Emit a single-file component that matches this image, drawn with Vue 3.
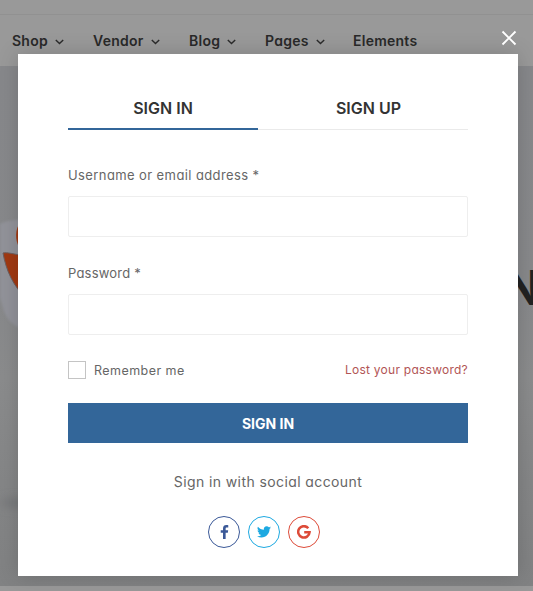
<script setup>
import { ref } from 'vue'

const menu = [
  { label: 'Shop', sub: true, key: 'shop' },
  { label: 'Vendor', sub: true, key: 'vendor' },
  { label: 'Blog', sub: true, key: 'blog' },
  { label: 'Pages', sub: true, key: 'pages' },
  { label: 'Elements', sub: false, key: 'elements' },
]
const tab = ref('in')
const username = ref('')
const password = ref('')
const remember = ref(false)
</script>

<template>
  <div class="page">
    <div class="topbar"></div>
    <nav class="menu">
      <a v-for="m in menu" :key="m.key" class="menu-item" :class="m.key">
        <span class="menu-label">{{ m.label }}</span>
        <svg v-if="m.sub" class="chevron" viewBox="0 0 9 6" width="9" height="6">
          <path d="M0.8 0.9 4.5 4.6 8.2 0.9" fill="none" stroke="#2b2b2b" stroke-width="1.4" />
        </svg>
      </a>
    </nav>
    <div class="hero">
      <svg class="hero-art" viewBox="0 0 533 520" width="533" height="520">
        <defs>
          <filter id="soft" x="-50%" y="-50%" width="200%" height="200%"><feGaussianBlur stdDeviation="0.8" /></filter>
          <filter id="haze" x="-50%" y="-100%" width="200%" height="300%"><feGaussianBlur stdDeviation="4" /></filter>
        </defs>
        <ellipse cx="16" cy="437" rx="16" ry="5" fill="#77787a" filter="url(#haze)" />
        <path d="M0 158C6 155 12 154 26 153V264C12 260 7 253 4 245 2 238 1 234 0 232Z" fill="#92939a" filter="url(#soft)" />
        <path d="M3 187C7 186 13 188 26 190V232C13 220 6 204 3 187Z" fill="#a13912" stroke="#6c5f60" stroke-width="1" />
        <path d="M20 157C15 163 15 174 19 181H26V157Z" fill="#a13912" />
      </svg>
      <span class="hero-text">N</span>
    </div>

    <div class="modal">
      <button class="close" aria-label="Close">
        <svg viewBox="0 0 16 16" width="16" height="16"><path d="M1.5 1.5 14.5 14.5M14.5 1.5 1.5 14.5" stroke="#fff" stroke-width="1.9" /></svg>
      </button>
      <div class="tabs">
        <button class="tab" :class="{ active: tab === 'in' }" @click="tab = 'in'">SIGN IN</button>
        <button class="tab" :class="{ active: tab === 'up' }" @click="tab = 'up'">SIGN UP</button>
      </div>
      <form class="form" @submit.prevent>
        <label class="label user" for="u">Username or email address *</label>
        <input id="u" v-model="username" class="field" type="text" />
        <label class="label pass" for="p">Password *</label>
        <input id="p" v-model="password" class="field" type="password" />
        <div class="options">
          <label class="remember"><input v-model="remember" class="check" type="checkbox" /><span>Remember me</span></label>
          <a class="lost">Lost your password?</a>
        </div>
        <button class="submit">SIGN IN</button>
      </form>
      <div class="social-title">Sign in with social account</div>
      <div class="socials">
        <a class="social fb">
          <svg viewBox="0 0 10 16" width="9" height="14"><path d="M9.3.2V2.8H7.8C6.6 2.8 6.3 3.4 6.3 4.2V6H9.2L8.8 8.8H6.3V16H3.3V8.8H.7V6H3.3V3.8C3.3 1.3 4.8 0 7.1 0 8.1 0 9 .1 9.3.2Z" fill="currentColor" /></svg>
        </a>
        <a class="social tw">
          <svg viewBox="0 0 24 20" width="14" height="12"><path d="M24 2.4c-.9.4-1.8.7-2.8.8 1-.6 1.8-1.6 2.2-2.7-1 .6-2 1-3.1 1.2A4.9 4.9 0 0 0 11.9 6.2C7.8 6 4.2 4 1.7.9A4.9 4.9 0 0 0 3.2 7.5C2.4 7.5 1.7 7.2 1 6.9 1 9.3 2.7 11.3 4.9 11.7 4.2 11.9 3.5 11.9 2.7 11.8 3.3 13.8 5.1 15.1 7.3 15.2A9.9 9.9 0 0 1 0 17.2 14 14 0 0 0 7.5 19.4C16.6 19.4 21.7 11.7 21.5 4.9 22.5 4.2 23.3 3.4 24 2.4Z" fill="currentColor" /></svg>
        </a>
        <a class="social gg">
          <svg viewBox="0 0 14 14" width="14" height="14"><path d="M11.3 3.2A5.700 5.700 0 1 0 12.600 7.200H7.200" fill="none" stroke="currentColor" stroke-width="2.5" /></svg>
        </a>
      </div>
    </div>
  </div>
</template>

<style>
body {
  overflow: hidden;
}
</style>

<style scoped>
.page {
  position: relative;
  width: 533px;
  height: 591px;
  overflow: hidden;
  background: #999;
  font-family: Inter, "Noto Sans", sans-serif;
  font-feature-settings: "cv11";
}
.page * {
  box-sizing: border-box;
}
button {
  border: 0;
  padding: 0;
  background: none;
  font: inherit;
  font-feature-settings: inherit;
}
.topbar {
  height: 15px;
  border-bottom: 1px solid #919191;
}
.menu {
  display: grid;
  grid-template-columns: 81px 96px 76px 88px 80px;
  align-items: center;
  height: 51px;
  padding-left: 12px;
}
.menu-item {
  display: flex;
  align-items: center;
  gap: 7px;
  font-size: 14px;
  line-height: 20px;
  font-weight: 600;
  letter-spacing: 0.25px;
  color: #292929;
  white-space: nowrap;
}
.chevron {
  margin-top: 3px;
}
.hero {
  position: relative;
  height: 520px;
  background: linear-gradient(#87888b 0%, #88898b 45%, #8b8c8d 60%, #858687 80%, #818283 100%);
}
.hero-art {
  display: block;
}
.hero-text {
  position: absolute;
  left: 504px;
  top: 193px;
  font-size: 48px;
  line-height: 58px;
  font-weight: 700;
  color: #222;
}
.modal {
  position: absolute;
  left: 18px;
  top: 54px;
  width: 500px;
  height: 522px;
  padding: 33px 50px 0;
  background: #fff;
  box-shadow: 0 0 20px rgba(0, 0, 0, 0.17);
}
.close {
  position: absolute;
  right: 1px;
  top: -24px;
  width: 16px;
  height: 16px;
}
.close svg {
  display: block;
}
.tabs {
  display: flex;
  height: 43px;
  border-bottom: 1px solid #eaeaea;
}
.tab {
  flex: 0 0 190px;
  height: 43px;
  border-bottom: 2px solid transparent;
  font-size: 16px;
  font-weight: 600;
  color: #333;
}
.tab + .tab {
  flex-basis: 210px;
  padding-left: 11px;
}
.tab.active {
  border-bottom-color: #336699;
}
.form {
  display: flex;
  flex-direction: column;
}
.label {
  align-self: flex-start;
  margin-top: 35px;
  font-size: 13px;
  line-height: 20px;
  letter-spacing: 0.4px;
  color: #666;
  white-space: nowrap;
}
.pass {
  margin-top: 26px;
  letter-spacing: 0.2px;
}
.field {
  height: 41px;
  margin: 11px 0 0;
  padding: 0 14px;
  border: 1px solid #eee;
  border-radius: 2px;
  background: #fff;
  outline: 0;
}
.options {
  display: flex;
  justify-content: space-between;
  align-items: center;
  height: 20px;
  margin-top: 25px;
  font-size: 12px;
  color: #666;
}
.remember {
  display: flex;
  align-items: center;
  gap: 8px;
  font-size: 12.5px;
  letter-spacing: 0.45px;
}
.check {
  appearance: none;
  width: 18px;
  height: 18px;
  margin: 0;
  border: 1px solid #c4c4c4;
}
.lost {
  margin-top: -2px;
  letter-spacing: 0.25px;
  color: #b25555;
}
.submit {
  height: 40px;
  margin-top: 23px;
  background: #336699;
  color: #fff;
  font-size: 14px;
  font-weight: 700;
}
.social-title {
  margin-top: 29px;
  text-align: center;
  font-size: 14px;
  line-height: 20px;
  letter-spacing: 0.4px;
  color: #666;
}
.socials {
  display: flex;
  gap: 8px;
  margin: 24px 0 0 140px;
}
.social {
  display: flex;
  align-items: center;
  justify-content: center;
  width: 32px;
  height: 32px;
  border: 1px solid currentColor;
  border-radius: 50%;
}
.fb { color: #3b5998; }
.tw { color: #1da9e1; }
.gg { color: #dd4b39; }
</style>
